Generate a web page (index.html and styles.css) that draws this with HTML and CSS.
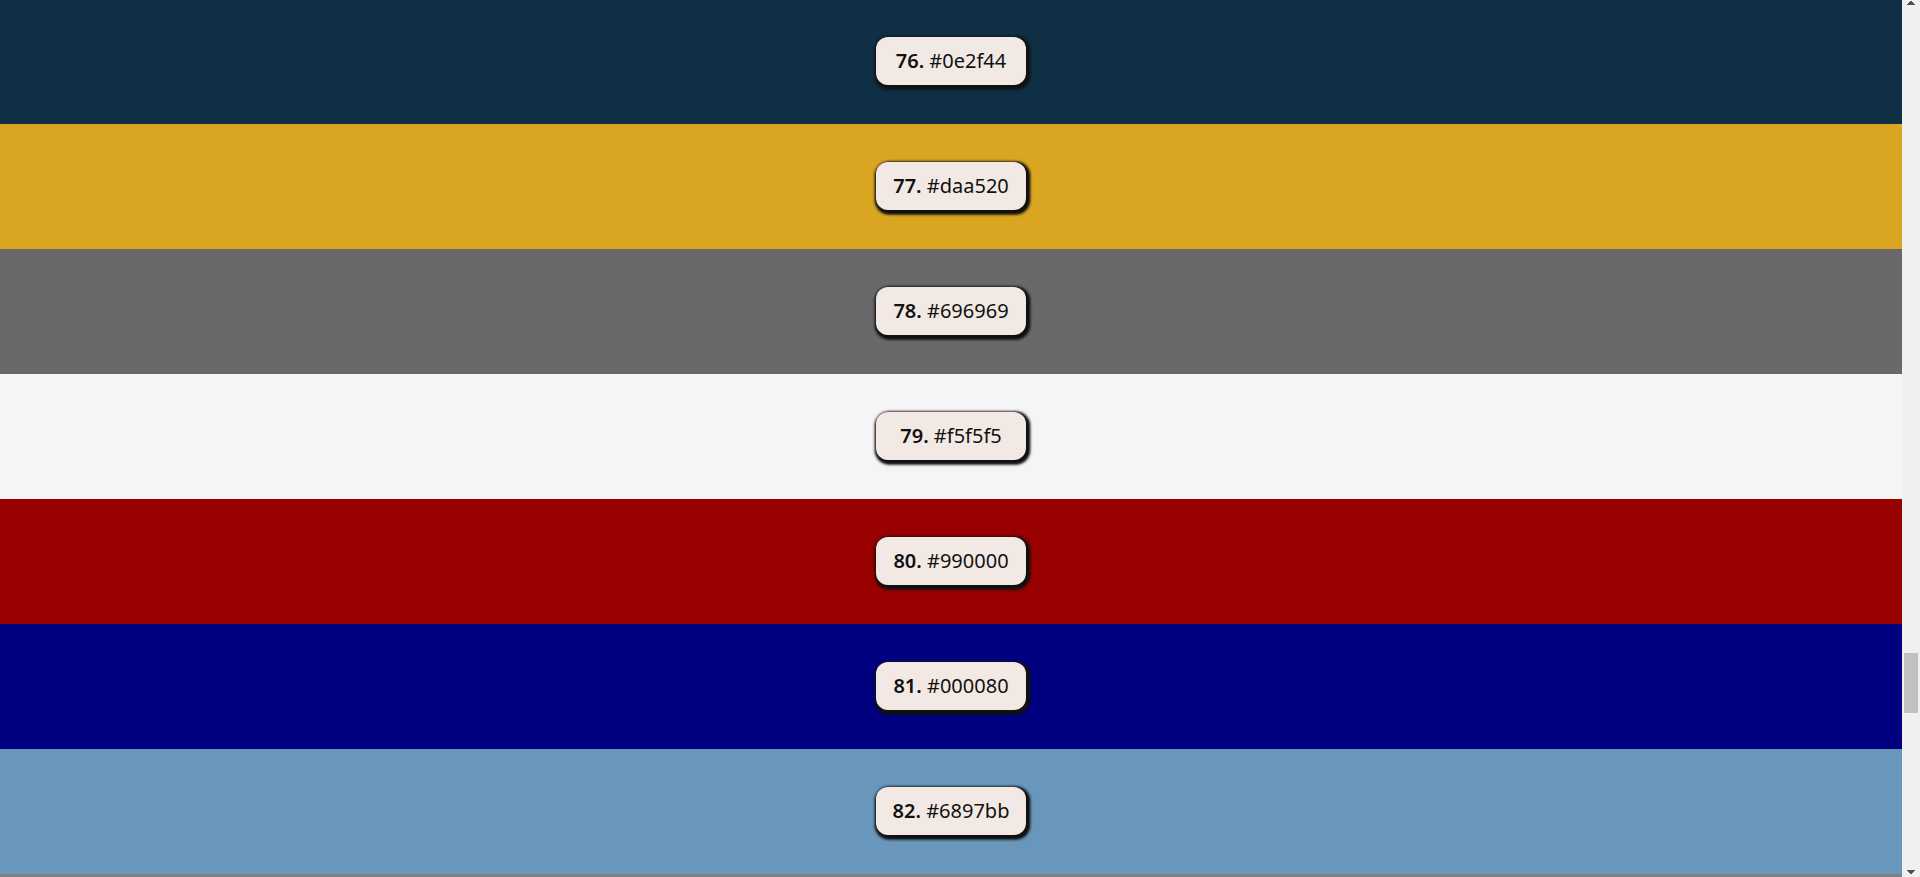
FILE: index.html
```html
<!DOCTYPE html>
<html lang="en">
<head>
<meta charset="utf-8">
<title>Colors</title>
<link rel="stylesheet" href="styles.css">
</head>
<body>
<main class="colors">
  <section class="color color-76"><p class="chip"><b>76.</b> #0e2f44</p></section>
  <section class="color color-77"><p class="chip"><b>77.</b> #daa520</p></section>
  <section class="color color-78"><p class="chip"><b>78.</b> #696969</p></section>
  <section class="color color-79"><p class="chip"><b>79.</b> #f5f5f5</p></section>
  <section class="color color-80"><p class="chip"><b>80.</b> #990000</p></section>
  <section class="color color-81"><p class="chip"><b>81.</b> #000080</p></section>
  <section class="color color-82"><p class="chip"><b>82.</b> #6897bb</p></section>
  <section class="color-rest"></section>
</main>
<div class="scrollbar" aria-hidden="true">
  <svg class="arrow" width="8" height="4" viewBox="0 0 8 4" shape-rendering="crispEdges"><path d="M3 0h2v1h1v1h1v1h1v1H0V3h1V2h1V1h1z"/></svg>
  <div class="track"><div class="thumb"></div></div>
  <svg class="arrow" width="8" height="4" viewBox="0 0 8 4" shape-rendering="crispEdges"><path d="M0 0h8v1H7v1H6v1H5v1H3V3H2V2H1V1H0z"/></svg>
</div>
</body>
</html>
```
FILE: styles.css
```css
* { box-sizing: border-box; }
body {
  display: flex;
  height: 100vh;
  margin: 0;
  overflow: hidden;
  font-family: "Noto Sans", "Open Sans", sans-serif;
  color: #111;
}
.colors {
  display: flex;
  flex: 1;
  flex-direction: column;
  margin-top: -1px;
}
.color {
  display: flex;
  flex-shrink: 0;
  justify-content: center;
  align-items: flex-start;
  min-height: 125px;
  padding: 38px 16px;
}
.chip {
  width: 150px;
  margin: 0;
  padding: 10px 0;
  border-radius: 12px;
  background: #f2e9e4;
  box-shadow: 1px 2px 3px 2px #111, 2px 2px 3px 2px #111;
  font-size: 20px;
  font-weight: 400;
  line-height: 28px;
  text-align: center;
}
.chip b { font-weight: 600; }
.color-76 { background: #0e2f44; }
.color-77 { background: #daa520; }
.color-78 { background: #696969; }
.color-79 { background: #f5f5f5; }
.color-80 { background: #990000; }
.color-81 { background: #000080; }
.color-82 { background: #6897bb; }
.color-rest {
  flex: 1;
  background: #808080;
}
.scrollbar {
  display: flex;
  flex-direction: column;
  align-items: center;
  width: 18px;
  padding: 1px 0 3px;
  background: #f0f0f0;
}
.arrow { fill: #505050; }
.track {
  flex: 1;
  width: 14px;
  padding-top: 648px;
}
.thumb {
  height: 60px;
  background: #c1c1c1;
}
```
